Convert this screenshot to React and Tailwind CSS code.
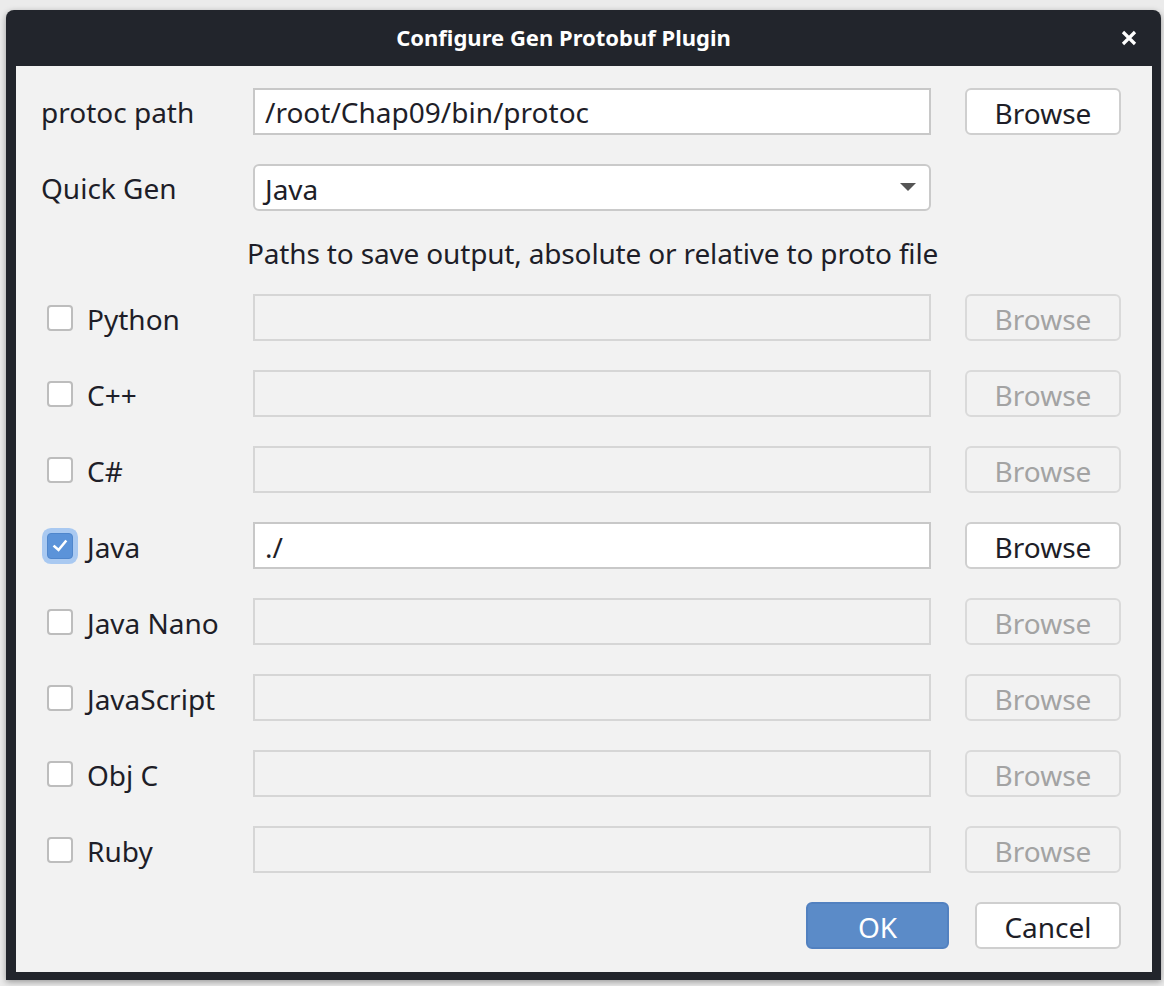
import React from "react";

const font = "font-['Noto_Sans','DejaVu_Sans',sans-serif]";

function Checkbox({ checked }) {
  if (checked) {
    return (
      <div className="w-[26px] h-[26px] rounded-[4px] bg-[#5b93d9] border border-[#4f86cc] ring-[5px] ring-[#a9c9f1] flex items-center justify-center shrink-0">
        <svg width="18" height="18" viewBox="0 0 18 18">
          <path d="M3.5 9.5 L7.5 13 L14.5 4.5" fill="none" stroke="#ffffff" strokeWidth="2.6" strokeLinecap="square" />
        </svg>
      </div>
    );
  }
  return <div className="w-[26px] h-[26px] rounded-[4px] bg-white border-2 border-[#bdbdbd] shrink-0" />;
}

function BrowseButton({ disabled }) {
  return (
    <div
      className={
        "ml-[34px] w-[156px] h-full rounded-[6px] border-2 flex items-center justify-center pt-[3px] " +
        (disabled
          ? "bg-[#f2f2f2] border-[#dadada] text-[#a3a3a3]"
          : "bg-white border-[#cfcfcf] text-[#1e1e28]")
      }
    >
      Browse
    </div>
  );
}

function LangRow({ name, checked, value }) {
  const enabled = checked;
  return (
    <div className="flex items-center h-[47px]">
      <div className="w-[237px] pl-[31px] flex items-center gap-[14px]">
        <Checkbox checked={checked} />
        <span className="pt-[3px]">{name}</span>
      </div>
      <div
        className={
          "w-[678px] h-full border-2 flex items-center px-[10px] pt-[3px] " +
          (enabled ? "bg-white border-[#c8c8c8]" : "bg-[#f2f2f2] border-[#d6d6d6]")
        }
      >
        {value}
      </div>
      <BrowseButton disabled={!enabled} />
    </div>
  );
}

export default function App() {
  const langs = [
    { name: "Python" },
    { name: "C++" },
    { name: "C#" },
    { name: "Java", checked: true, value: "./" },
    { name: "Java Nano" },
    { name: "JavaScript" },
    { name: "Obj C" },
    { name: "Ruby" },
  ];
  return (
    <div className={"w-[1164px] h-[986px] bg-[#ebebeb] overflow-hidden pt-[10px] pl-[6px] " + font}>
      <div className="w-[1155px] h-[970px] bg-[#22252c] rounded-t-[8px] flex flex-col pl-[10px] pr-[9px] pb-[8px] shadow-[0_2px_6px_rgba(0,0,0,0.35)]">
        <div className="h-[56px] flex items-center shrink-0">
          <div className="flex-1 text-center text-white font-bold text-[22px] pb-[2px]">
            Configure Gen Protobuf Plugin
          </div>
          <div className="w-[41px] flex items-center justify-start pl-[9px]">
            <svg width="18" height="18" viewBox="0 0 18 18">
              <path d="M3 3 L15 15 M15 3 L3 15" stroke="#ffffff" strokeWidth="3.2" strokeLinecap="butt" />
            </svg>
          </div>
        </div>
        <div className="flex-1 bg-[#f2f2f2] text-[28px] leading-[38px] text-[#1e1e28] pt-[22px] pb-[23px] flex flex-col">
          <div className="flex items-center h-[47px]">
            <div className="w-[237px] pl-[25px]">protoc path</div>
            <div className="w-[678px] h-full border-2 bg-white border-[#c8c8c8] flex items-center px-[10px]">
              /root/Chap09/bin/protoc
            </div>
            <BrowseButton />
          </div>
          <div className="flex items-center h-[47px] mt-[29px]">
            <div className="w-[237px] pl-[25px]">Quick Gen</div>
            <div className="w-[678px] h-full border-2 bg-white border-[#cacaca] rounded-[6px] flex items-center justify-between pl-[10px] pr-[13px]">
              <span className="pt-[3px]">Java</span>
              <svg width="16" height="9" viewBox="0 0 16 9">
                <path d="M0 0 L16 0 L8 8 Z" fill="#555555" />
              </svg>
            </div>
          </div>
          <div className="h-[36px] mt-[24px] pl-[231px] flex items-center tracking-[-0.16px]">
            Paths to save output, absolute or relative to proto file
          </div>
          <div className="flex flex-col gap-[29px] mt-[23px]">
            {langs.map((l) => (
              <LangRow key={l.name} {...l} />
            ))}
          </div>
          <div className="flex justify-end gap-[26px] pr-[31px] mt-[29px] h-[47px]">
            <div className="w-[143px] h-full rounded-[6px] bg-[#5b8bc8] border-2 border-[#5281c0] text-white flex items-center justify-center pt-[3px]">
              OK
            </div>
            <div className="w-[146px] h-full rounded-[6px] bg-white border-2 border-[#cfcfcf] flex items-center justify-center pt-[3px]">
              Cancel
            </div>
          </div>
        </div>
      </div>
    </div>
  );
}
